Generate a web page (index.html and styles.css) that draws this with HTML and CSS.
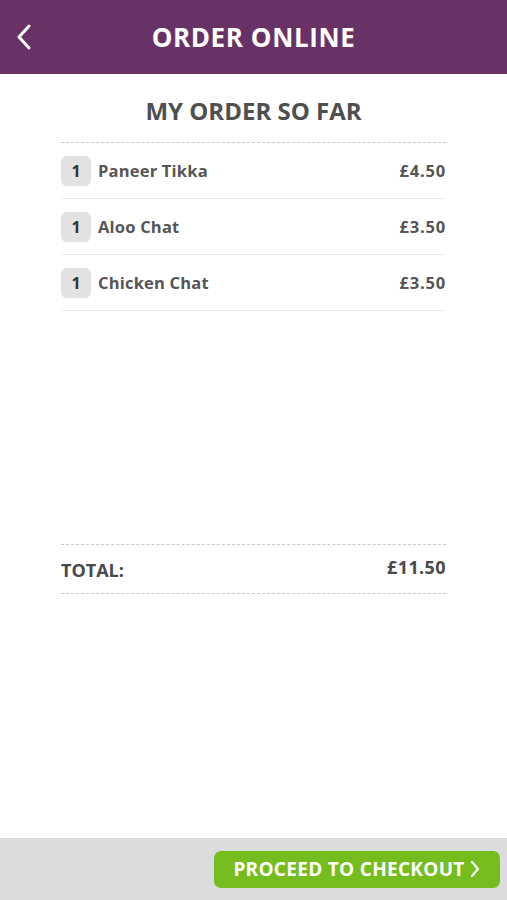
FILE: index.html
```html
<!DOCTYPE html>
<html lang="en">
<head>
    <meta charset="UTF-8">
    <meta name="viewport" content="width=device-width, initial-scale=1.0">
    <title>Order Online</title>
    <link rel="stylesheet" href="styles.css">
</head>
<body>
<div class="app">
  <header class="top-bar">
    <button class="back-btn" aria-label="Back">
      <svg width="18" height="28" viewBox="0 0 18 28"><path d="M14 3 L4 14 L14 25" fill="none" stroke="#fff" stroke-width="3" stroke-linecap="round" stroke-linejoin="round"/></svg>
    </button>
    <h1>ORDER ONLINE</h1>
  </header>

  <main class="main-content">
    <h2>MY ORDER SO FAR</h2>
    <div class="order-list">
      <div class="order-item">
        <span class="qty">1</span>
        <span class="name">Paneer Tikka</span>
        <span class="price">£4.50</span>
      </div>
      <div class="order-item">
        <span class="qty">1</span>
        <span class="name">Aloo Chat</span>
        <span class="price">£3.50</span>
      </div>
      <div class="order-item">
        <span class="qty">1</span>
        <span class="name">Chicken Chat</span>
        <span class="price">£3.50</span>
      </div>
    </div>

    <div class="total-row">
      <span class="total-label">TOTAL:</span>
      <span class="total-price">£11.50</span>
    </div>
  </main>

  <footer class="bottom-bar">
    <button class="checkout-btn">PROCEED TO CHECKOUT
      <svg width="12" height="20" viewBox="0 0 12 20"><path d="M3 3 L9 10 L3 17" fill="none" stroke="#fff" stroke-width="2.2" stroke-linecap="round" stroke-linejoin="round"/></svg>
    </button>
  </footer>
</div>
</body>
</html>
```

FILE: styles.css
```css
body {
  font-family: "Open Sans", Arial, sans-serif;
  background-color: #fff;
  margin: 0;
  padding: 0;
}

.app {
  height: 900px;
  display: flex;
  flex-direction: column;
}

.top-bar {
  height: 74px;
  flex-shrink: 0;
  background-color: #693267;
  display: flex;
  align-items: center;
  justify-content: center;
  position: relative;
}

.back-btn {
  position: absolute;
  left: 15px;
  top: 23px;
  background: none;
  border: none;
  padding: 0;
  cursor: pointer;
}

.top-bar h1 {
  margin: 0;
  color: #fff;
  font-size: 26px;
  font-weight: 700;
  letter-spacing: 0.6px;
}

.main-content {
  flex: 1;
  padding: 22px 61px 0;
}

h2 {
  text-align: center;
  margin: 0 0 16px;
  font-size: 24px;
  font-weight: 700;
  color: #4f4f4f;
  line-height: 30px;
}

.order-list {
  border-top: 1px dashed #c8c8c8;
  height: 401px;
}

.order-item {
  display: flex;
  align-items: center;
  height: 55px;
  border-bottom: 1px solid #ececec;
}

.qty {
  width: 30px;
  height: 30px;
  background: #e2e2e2;
  border-radius: 6px;
  display: flex;
  align-items: center;
  justify-content: center;
  font-size: 16px;
  font-weight: 700;
  color: #333;
  margin-right: 7px;
}

.name {
  flex: 1;
  font-size: 16.5px;
  font-weight: 700;
  color: #555;
  letter-spacing: 0.2px;
}

.price {
  font-size: 16.5px;
  font-weight: 700;
  color: #555;
  letter-spacing: 0.8px;
}

.total-row {
  display: flex;
  justify-content: space-between;
  align-items: center;
  height: 48px;
  border-top: 1px dashed #c8c8c8;
  border-bottom: 1px dashed #c8c8c8;
}

.total-label {
  font-size: 18px;
  font-weight: 700;
  color: #4a4a4a;
  padding-top: 2px;
}

.total-price {
  font-size: 18px;
  font-weight: 700;
  color: #4a4a4a;
  padding-bottom: 4px;
  letter-spacing: 0.4px;
}

.bottom-bar {
  height: 62px;
  flex-shrink: 0;
  background: #dcdcdc;
  display: flex;
  align-items: center;
  justify-content: flex-end;
  padding-right: 7px;
}

.checkout-btn {
  background-color: #75bd1e;
  color: #fff;
  height: 37px;
  width: 286px;
  border: none;
  border-radius: 7px;
  font-family: "Open Sans", Arial, sans-serif;
  font-size: 19px;
  font-weight: 700;
  letter-spacing: 0.3px;
  display: flex;
  align-items: center;
  justify-content: center;
  gap: 4px;
  padding: 0;
  cursor: pointer;
}
```
